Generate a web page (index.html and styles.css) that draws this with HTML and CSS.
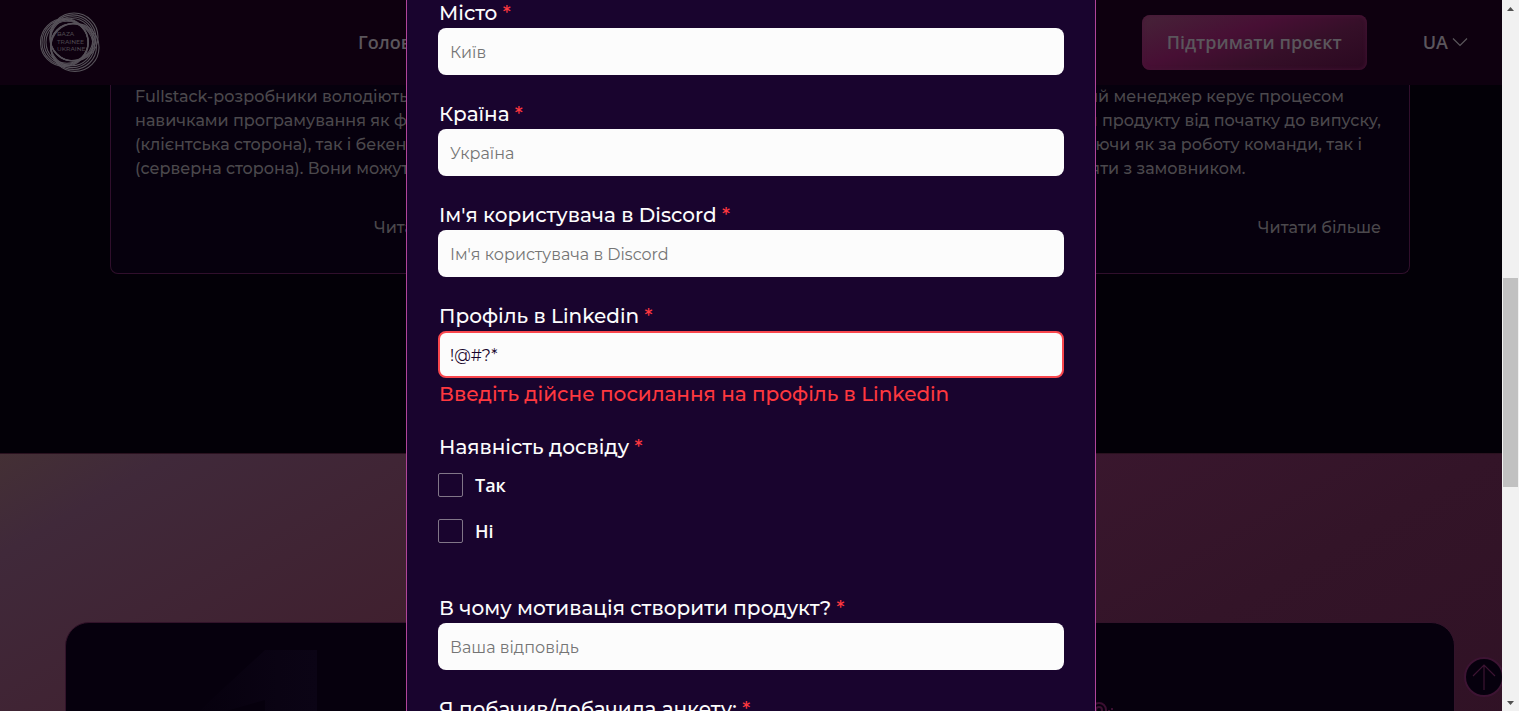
FILE: index.html
```html
<!DOCTYPE html>
<html lang="uk">
<head>
<meta charset="utf-8">
<title>Baza Trainee Ukraine</title>
<link rel="stylesheet" href="styles.css">
</head>
<body>
<div class="shell">
  <div class="stage">
    <header class="header">
      <a class="logo" href="#" aria-label="Baza Trainee Ukraine">
        <svg viewBox="0 0 60 60" width="60" height="60">
          <g fill="none" stroke="#57525a" stroke-width="1.1">
            <circle cx="31.700" cy="27.500" r="21"/><circle cx="32.300" cy="26.700" r="22"/><circle cx="32.900" cy="25.900" r="23"/><circle cx="34" cy="25" r="24"/>
            <circle cx="27" cy="30.300" r="21"/><circle cx="26" cy="30.300" r="22"/><circle cx="25" cy="30.400" r="23"/><circle cx="24.500" cy="30.500" r="24"/>
            <circle cx="31.800" cy="32.700" r="21"/><circle cx="32.500" cy="33.600" r="22"/><circle cx="33.500" cy="34.500" r="23"/><circle cx="35" cy="35.400" r="24"/>
          </g>
          <g class="logo-text">
            <text x="17" y="24">BAZA</text>
            <text x="17" y="32">TRAINEE</text>
            <text x="17" y="39">UKRAINE</text>
          </g>
        </svg>
      </a>
      <nav class="nav"><a href="#">Головна</a></nav>
      <button class="support" type="button">Підтримати проєкт</button>
      <button class="lang" type="button">UA
        <svg width="16" height="10" viewBox="0 0 16 10"><path d="M1 1.500 8 8.500 15 1.500" fill="none" stroke="#5b565c" stroke-width="1.2"/></svg>
      </button>
    </header>

    <main class="page">
      <section class="roles">
        <article class="card">
          <p>Fullstack-розробники володіють<br>навичками програмування як фронтенд<br>(клієнтська сторона), так і бекенд<br>(серверна сторона). Вони можуть</p>
          <a class="more" href="#">Читати більше</a>
        </article>
        <article class="card"></article>
        <article class="card">
          <p>Проєктний менеджер керує процесом<br>розробки продукту від початку до випуску,<br>відповідаючи як за роботу команди, так і<br>взаємодіяти з замовником.</p>
          <a class="more" href="#">Читати більше</a>
        </article>
      </section>
      <section class="steps">
        <div class="panel">
          <svg class="digit" width="130" height="120" viewBox="0 0 130 120"><defs><linearGradient id="d"><stop offset="0" stop-color="#06000d"/><stop offset=".7" stop-color="#0a0313"/><stop offset="1" stop-color="#0b0415"/></linearGradient></defs><path d="M78 0H130V120H78V50L0 72Z" fill="url(#d)"/></svg>
          <svg class="mark" width="24" height="24" viewBox="0 0 24 24"><g fill="none" stroke="#3b0f31" stroke-width="2"><circle cx="9" cy="9" r="7"/><circle cx="9" cy="9" r="3"/><path d="M19 9v3M21 8h2"/></g></svg>
        </div>
      </section>
    </main>

    <button class="to-top" type="button" aria-label="Вгору">
      <svg width="24" height="28" viewBox="0 0 24 28"><path d="M12 27V2M1 13 12 2 23 13" fill="none" stroke="#3d1433" stroke-width="1.2"/></svg>
    </button>

    <div class="overlay">
      <form class="modal">
        <div class="field"><label for="city">Місто <b>*</b></label><input id="city" type="text" placeholder="Київ"></div>
        <div class="field"><label for="country">Країна <b>*</b></label><input id="country" type="text" placeholder="Україна"></div>
        <div class="field"><label for="discord">Ім'я користувача в Discord <b>*</b></label><input id="discord" type="text" placeholder="Ім'я користувача в Discord"></div>
        <div class="field invalid"><label for="linkedin">Профіль в Linkedin <b>*</b></label><input id="linkedin" type="text" value="!@#?*"><p class="error">Введіть дійсне посилання на профіль в Linkedin</p></div>
        <fieldset class="choices">
          <legend>Наявність досвіду <b>*</b></legend>
          <label class="choice"><input type="checkbox">Так</label>
          <label class="choice"><input type="checkbox">Ні</label>
        </fieldset>
        <div class="field"><label for="motive">В чому мотивація створити продукт? <b>*</b></label><input id="motive" type="text" placeholder="Ваша відповідь"></div>
        <div class="field"><label for="source">Я побачив/побачила анкету: <b>*</b></label><input id="source" type="text"></div>
      </form>
    </div>
  </div>
  <div class="scrollbar" aria-hidden="true">
    <svg width="7" height="4" viewBox="0 0 7 4"><path d="M0 4 3.500 0 7 4Z" fill="#505050"/></svg>
    <div class="track"><div class="thumb"></div></div>
    <svg width="7" height="4" viewBox="0 0 7 4"><path d="M0 0 3.500 4 7 0Z" fill="#505050"/></svg>
  </div>
</div>
</body>
</html>
```
FILE: styles.css
```css
* { box-sizing: border-box; }
body { margin: 0; background: #030007; font-family: Montserrat, Inter, sans-serif; }
p { margin: 0; }
a { color: inherit; text-decoration: none; }
button { margin: 0; padding: 0; border: 0; background: none; color: inherit; font: inherit; }

.shell { display: flex; height: 100vh; overflow: hidden; }
.stage { position: relative; flex: 1; overflow: hidden; }

.header {
  display: flex; align-items: center; height: 85px; padding: 0 34px 1px 40px;
  background: #0e000f; color: #5b565c;
  font: 600 18px/24px "Open Sans", sans-serif;
}
.logo { display: flex; }
.logo-text { fill: #4c474e; font: 500 6px Montserrat, Inter, sans-serif; }
.nav { flex: 1; padding-left: 258px; }
.support {
  height: 55px; padding: 0 25px; border-radius: 8px;
  background: linear-gradient(160deg, #462338 0%, #470f34 38%, #350f28 65%, #2a0820 100%);
  box-shadow: inset 0 0 4px #4a1538;
}
.lang { display: flex; align-items: center; gap: 4px; margin-left: 56px; }

.page { color: #4b484c; }
.roles {
  display: grid; grid-template-columns: repeat(3, 1fr); gap: 24px;
  padding: 0 92px 179px 110px; background: #030007;
}
.card {
  display: flex; flex-direction: column; gap: 35px; padding: 0 28px 33px 24px;
  border: 1px solid #300f2c; border-top: 0; border-radius: 0 0 8px 8px;
  background: #06000d; font-weight: 500; font-size: 16px; line-height: 24px; white-space: nowrap;
}
.more { align-self: flex-end; }
.steps {
  padding: 168px 47px 0 65px; border-top: 1px solid #2a111f;
  background: linear-gradient(150deg, #443035 0%, #40293a 7%, #40202f 28%, #3c1830 37%, #331428 60%, #2d0f22 100%);
}
.panel {
  position: relative; height: 400px; border: 1px solid #32132a; border-radius: 24px; background: #06000d;
}
.digit { position: absolute; left: 121px; top: 27px; }
.mark { position: absolute; left: 1024px; top: 78px; }

.to-top {
  position: absolute; right: -2px; bottom: 14px; width: 40px; height: 40px;
  display: flex; align-items: center; justify-content: center;
  border: 2px solid #3d1433; border-radius: 50%; background: #06000d;
}

.overlay { position: absolute; inset: 0; display: flex; justify-content: center; overflow: hidden; }
.modal {
  display: flex; flex-direction: column; gap: 26px; align-self: flex-start;
  width: 690px; padding: 0 31px; border: solid #b0459a; border-width: 0 1px;
  background: #19042e; color: #fcfcfc; font-weight: 500; font-size: 20px; line-height: 26px;
}
.modal b { color: #ff383f; font-weight: 500; }
.field { display: flex; flex-direction: column; gap: 2px; }
.field label, .error, .choices legend { padding: 0 0 0 1px; }
.field input {
  height: 47px; padding: 2px 12px 0; border: 0; border-radius: 8px; background: #fcfcfc;
  color: #18042c; font: 400 16px Montserrat, Inter, sans-serif;
}
.field input::placeholder { color: #757575; opacity: 1; }
.invalid input { border: 2px solid #f9474d; padding: 2px 10px 0; }
.error { color: #ff383f; line-height: 28px; }
.choices { display: flex; flex-direction: column; gap: 22px; min-width: 0; margin: 0; padding: 0 0 26px; border: 0; }
.choices legend { margin-bottom: 13px; }
.choice { display: flex; align-items: center; gap: 12px; font: 600 18px/24px "Open Sans", sans-serif; }
.choice input { appearance: none; width: 25px; height: 24px; margin: 0; border: 1px solid #817688; border-radius: 2px; }

.scrollbar {
  display: flex; flex-direction: column; align-items: center; gap: 8px;
  width: 17px; padding: 7px 0 6px; background: #f1f1f1;
}
.track { flex: 1; width: 15px; padding-top: 259px; }
.thumb { height: 209px; background: #c1c1c1; }
```
